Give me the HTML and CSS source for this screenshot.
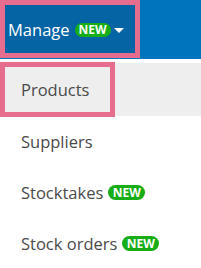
FILE: index.html
```html
<!DOCTYPE html>
<html>
<head>
<meta charset="utf-8">
<link rel="stylesheet" href="styles.css">
</head>
<body>
<div class="topbar">
  <div class="manage">
    <span class="manage-label">Manage</span>
    <span class="badge badge-sm">NEW</span>
    <span class="caret"></span>
  </div>
</div>
<ul class="menu">
  <li class="item item-active">Products<span class="highlight"></span></li>
  <li class="item">Suppliers</li>
  <li class="item">Stocktakes<span class="badge">NEW</span></li>
  <li class="item">Stock orders<span class="badge">NEW</span></li>
</ul>
</body>
</html>
```
FILE: styles.css
```css
html, body {
  margin: 0;
  padding: 0;
  background: #ffffff;
  font-family: "Open Sans", "Noto Sans", sans-serif;
}
.topbar {
  display: flex;
  height: 59px;
  background: #0074bd;
}
.manage {
  box-sizing: border-box;
  width: 140px;
  height: 58px;
  border: 5px solid #e66d8e;
  background: #0564a4;
  display: flex;
  align-items: center;
  padding-left: 3px;
  padding-top: 1px;
  color: #ffffff;
}
.manage-label {
  font-size: 16.5px;
}
.badge {
  display: inline-flex;
  align-items: center;
  justify-content: center;
  background: #16ad16;
  color: #ffffff;
  font-weight: 700;
  font-size: 12px;
  border-radius: 8px;
  width: 37px;
  height: 15px;
  margin-left: 5px;
  line-height: 1;
}
.badge-sm {
  width: 36px;
  height: 14px;
}
.caret {
  width: 0;
  height: 0;
  border-left: 5px solid transparent;
  border-right: 5px solid transparent;
  border-top: 5px solid #ffffff;
  margin-left: 3px;
  margin-top: 1px;
}
.menu {
  list-style: none;
  margin: 4px 0 0 0;
  padding: 0;
}
.item {
  position: relative;
  display: flex;
  align-items: center;
  height: 51px;
  padding-left: 21px;
  font-size: 16.5px;
  color: #4a4a4a;
}
.item-active {
  background: #eeeeee;
  height: 53px;
}
.highlight {
  position: absolute;
  left: 0;
  top: -1px;
  width: 115px;
  height: 55px;
  box-sizing: border-box;
  border: 5px solid #e66d8e;
}
```
